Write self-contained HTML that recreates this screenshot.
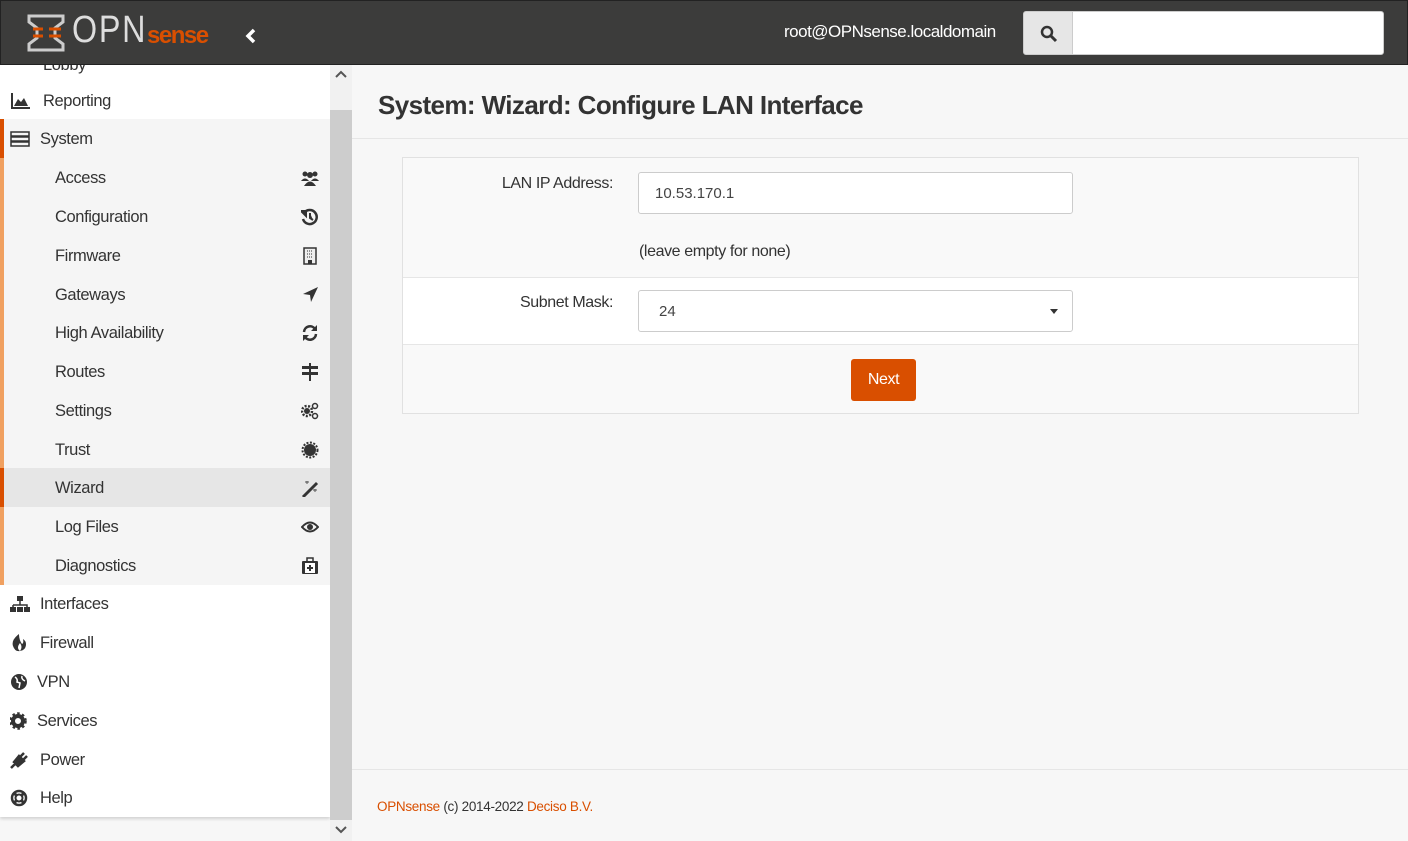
<!DOCTYPE html>
<html><head><meta charset="utf-8"><style>
*{box-sizing:border-box;margin:0;padding:0}
body{width:1408px;height:841px;overflow:hidden;background:#f7f7f7;font-family:"Liberation Sans",sans-serif;color:#333;position:relative}
.top{position:absolute;left:0;top:0;width:1408px;height:65px;background:#3c3c3b;border:1px solid #222}
.side{position:absolute;left:0;top:65px;width:330px;height:752px;background:#fff;box-shadow:0 2px 3px rgba(0,0,0,.15);overflow:hidden}
.row{position:absolute;left:0;width:330px;height:39px;font-size:16.5px;letter-spacing:-.4px;line-height:40px;color:#333}
.sub{background:#f5f5f5;border-left:4px solid #f0a060}
.sub span{position:absolute;left:51px}
.ic{position:absolute;right:11px;top:11px;width:18px;height:18px;fill:#333}
.mi{position:absolute;left:10px;top:11px;width:20px;height:18px;fill:#333}
.sb{position:absolute;left:330px;top:65px;width:22px;height:776px;background:#f1f1f1}
.thumb{position:absolute;left:330px;top:110px;width:22px;height:710px;background:#cdcdcd}
.main{position:absolute;left:352px;top:65px;width:1056px;height:776px}
h1{position:absolute;left:26px;top:25px;font-size:26px;color:#333;letter-spacing:-.6px;font-weight:bold}
.hdl{position:absolute;left:0;top:73px;width:1056px;border-top:1px solid #e6e6e6}
.box{position:absolute;left:50px;top:92px;width:957px;height:257px;border:1px solid #e1e1e1;background:#f9f9f9}
.lbl{position:absolute;right:745px;font-size:16px;letter-spacing:-.4px;color:#333}
.inp{position:absolute;left:235px;width:435px;height:42px;border:1px solid #ccc;border-radius:3px;background:#fff;font-size:15px;padding-left:16px;line-height:42px;color:#444}
.btn{position:absolute;left:448px;top:201px;width:65px;height:42px;background:#d94f00;border-radius:3px;color:#fff;font-size:16px;letter-spacing:-.4px;text-align:center;line-height:42px}
.foot{position:absolute;left:0;top:704px;width:1056px;border-top:1px solid #e6e6e6;font-size:13.5px;padding:29px 0 0 25px;color:#333;letter-spacing:-.3px}
.foot a{color:#d94f00;text-decoration:none}
</style></head><body>
<div class="top">
 <svg style="position:absolute;left:26px;top:13px" width="40" height="38" viewBox="0 0 40 38"><path d="M2 2h34v6L28 14v10l8 6v6H2v-6l8-6V14L2 8z" fill="none" stroke="#ccc" stroke-width="3"/><path d="M6 15h10M6 22h10M22 15h12M22 22h12" stroke="#d94f00" stroke-width="3"/></svg>
 <div style="position:absolute;left:71px;top:8px;font-size:38px;color:#ddd;font-weight:normal;letter-spacing:2px;transform:scaleX(.85);transform-origin:left">OPN</div>
 <div style="position:absolute;left:146px;top:21px;font-size:24px;color:#d94f00;font-weight:bold;letter-spacing:-1.5px">sense</div>
 <svg style="position:absolute;left:244px;top:27px" width="12" height="16" viewBox="0 0 12 16"><path d="M9 2L3 8l6 6" fill="none" stroke="#fff" stroke-width="3.5"/></svg>
 <div style="position:absolute;left:783px;top:21px;color:#fff;font-size:17px;letter-spacing:-.5px">root@OPNsense.localdomain</div>
 <div style="position:absolute;left:1022px;top:10px;width:50px;height:44px;background:#e6e6e6;border:1px solid #ccc;border-radius:3px 0 0 3px"><svg style="position:absolute;left:16px;top:13px" width="18" height="18" viewBox="0 0 18 18"><circle cx="7" cy="7" r="5" fill="none" stroke="#333" stroke-width="2.5"/><path d="M11 11l5 5" stroke="#333" stroke-width="3"/></svg></div>
 <div style="position:absolute;left:1071px;top:10px;width:312px;height:44px;background:#fff;border:1px solid #ccc;border-radius:0 3px 3px 0"></div>
</div>
<div class="side">
 <div class="row" style="top:-20px"><span style="position:absolute;left:43px">Lobby</span></div>
 <div class="row" style="top:16px"><svg class="mi" viewBox="0 0 20 18"><path d="M1 1v16h19v-2H3V1zM4 14l4-7 3 3 3-4 4 8z"/></svg><span style="position:absolute;left:43px">Reporting</span></div>
 <div class="row" style="top:54px;background:#f5f5f5;border-left:4px solid #d94f00"><svg class="mi" style="left:6px" viewBox="0 0 20 18"><path d="M1 2h18v4H1zM1 7h18v4H1zM1 12h18v4H1z" fill="none" stroke="#333" stroke-width="1.5"/></svg><span style="position:absolute;left:36px">System</span></div>
 <div class="row sub" style="top:93px"><span>Access</span><svg class="ic" viewBox="0 0 18 18"><circle cx="4" cy="5" r="2.5"/><circle cx="14" cy="5" r="2.5"/><circle cx="9" cy="6" r="3"/><path d="M0 12q4-5 8 0zM10 12q4-5 8 0zM3 17q6-9 12 0z"/></svg></div>
 <div class="row sub" style="top:132px"><span>Configuration</span><svg class="ic" viewBox="0 0 18 18"><path d="M3 5a7 7 0 1 1-1 6" fill="none" stroke="#333" stroke-width="2.5"/><path d="M0 3l5 0 0 5z M9 5v5l3 2" stroke="#333" stroke-width="2"/></svg></div>
 <div class="row sub" style="top:171px"><span>Firmware</span><svg class="ic" viewBox="0 0 18 18"><rect x="3" y="1" width="12" height="16" fill="#eee" stroke="#333" stroke-width="1.5"/><path d="M6 4h6M6 7h6M6 10h6" stroke="#333" stroke-dasharray="1 1"/><rect x="7" y="13" width="4" height="4"/></svg></div>
 <div class="row sub" style="top:210px"><span>Gateways</span><svg class="ic" viewBox="0 0 18 18"><path d="M17 1L2 8l7 1 1 7z"/></svg></div>
 <div class="row sub" style="top:248px"><span>High Availability</span><svg class="ic" viewBox="0 0 18 18"><path d="M3 8a6 6 0 0 1 11-3M15 10a6 6 0 0 1-11 3" fill="none" stroke="#333" stroke-width="2.5"/><path d="M16 1v6h-6zM2 17v-6h6z"/></svg></div>
 <div class="row sub" style="top:287px"><span>Routes</span><svg class="ic" viewBox="0 0 18 18"><path d="M8 0h2v18H8zM1 3h16v3H1zM1 9h16v3H1z"/></svg></div>
 <div class="row sub" style="top:326px"><span>Settings</span><svg class="ic" viewBox="0 0 18 18"><circle cx="6" cy="9" r="3"/><circle cx="6" cy="9" r="5" fill="none" stroke="#333" stroke-width="2.5" stroke-dasharray="2 1.5"/><circle cx="14" cy="4" r="2.5" fill="none" stroke="#333" stroke-width="1.5"/><circle cx="14" cy="14" r="2.5" fill="none" stroke="#333" stroke-width="1.5"/></svg></div>
 <div class="row sub" style="top:365px"><span>Trust</span><svg class="ic" viewBox="0 0 18 18"><circle cx="9" cy="9" r="6"/><circle cx="9" cy="9" r="7.5" fill="none" stroke="#333" stroke-width="2" stroke-dasharray="2 1.5"/></svg></div>
 <div class="row sub" style="top:403px;background:#e6e6e6;border-left-color:#d94f00"><span>Wizard</span><svg class="ic" viewBox="0 0 18 18"><path d="M2 17L15 4l1 1L3 18z" stroke="#333" stroke-width="1.5"/><path d="M6 2v3M4 3h4M14 10v3M12 11h4" stroke="#555"/></svg></div>
 <div class="row sub" style="top:442px"><span>Log Files</span><svg class="ic" viewBox="0 0 18 18"><path d="M1 9q8-9 16 0q-8 9-16 0z" fill="none" stroke="#333" stroke-width="2"/><circle cx="9" cy="9" r="3"/></svg></div>
 <div class="row sub" style="top:481px"><span>Diagnostics</span><svg class="ic" viewBox="0 0 18 18"><rect x="1" y="4" width="16" height="13" rx="1"/><rect x="6" y="1" width="6" height="4" fill="none" stroke="#333" stroke-width="1.5"/><rect x="4" y="6" width="10" height="10" fill="#fff"/><path d="M8 8h2v6H8zM6 10h6v2H6z"/></svg></div>
 <div class="row" style="top:519px"><svg class="mi" viewBox="0 0 20 18"><rect x="7" y="1" width="6" height="5"/><path d="M10 6v4M3 10h14v3M3 10v3" stroke="#333" stroke-width="1.5" fill="none"/><rect x="0" y="12" width="6" height="5"/><rect x="7" y="12" width="6" height="5"/><rect x="14" y="12" width="6" height="5"/></svg><span style="position:absolute;left:40px">Interfaces</span></div>
 <div class="row" style="top:558px"><svg class="mi" viewBox="0 0 20 18"><path d="M9 0q-8 6-6 12q2 6 7 5q-4-3 0-8q3 4 0 8q6-1 6-7q0-3-3-5q1 4-1 5q-3-4-3-10z"/></svg><span style="position:absolute;left:40px">Firewall</span></div>
 <div class="row" style="top:597px"><svg class="mi" viewBox="0 0 20 18"><circle cx="9" cy="9" r="8"/><path d="M5 4q3 2 2 5l3 1-1 5M12 3q-1 3 3 5" stroke="#fff" stroke-width="1.5" fill="none"/></svg><span style="position:absolute;left:37px">VPN</span></div>
 <div class="row" style="top:636px"><svg class="mi" viewBox="0 0 20 18"><circle cx="8" cy="9" r="5" fill="none" stroke="#333" stroke-width="4"/><circle cx="8" cy="9" r="7.5" fill="none" stroke="#333" stroke-width="2.5" stroke-dasharray="2.5 2.4"/></svg><span style="position:absolute;left:37px">Services</span></div>
 <div class="row" style="top:675px"><svg class="mi" viewBox="0 0 20 18"><path d="M1 17l4-4M4 11l5-6 5 5-6 5zM10 6l4-4M13 9l4-4" stroke="#333" stroke-width="2.5"/></svg><span style="position:absolute;left:40px">Power</span></div>
 <div class="row" style="top:713px"><svg class="mi" viewBox="0 0 20 18"><circle cx="9" cy="9" r="7" fill="none" stroke="#333" stroke-width="2.5"/><circle cx="9" cy="9" r="3.5" fill="none" stroke="#333" stroke-width="2"/><path d="M4 4l3 3M14 4l-3 3M4 14l3-3M14 14l-3-3" stroke="#333" stroke-width="3"/></svg><span style="position:absolute;left:40px">Help</span></div>
</div>
<div class="sb"></div><div class="thumb"></div>
<svg style="position:absolute;left:335px;top:826px" width="12" height="8" viewBox="0 0 12 8"><path d="M1 1l5 5 5-5" fill="none" stroke="#555" stroke-width="2"/></svg>
<svg style="position:absolute;left:335px;top:70px" width="12" height="8" viewBox="0 0 12 8"><path d="M1 7l5-5 5 5" fill="none" stroke="#555" stroke-width="2"/></svg>
<div class="main">
 <h1>System: Wizard: Configure LAN Interface</h1>
 <div class="hdl"></div>
 <div class="box">
  <div class="lbl" style="top:17px">LAN IP Address:</div>
  <div class="inp" style="top:14px">10.53.170.1</div>
  <div style="position:absolute;left:236px;top:85px;font-size:16px;letter-spacing:-.4px">(leave empty for none)</div>
  <div style="position:absolute;left:0;top:119px;width:955px;height:68px;background:#fff;border-top:1px solid #e6e6e6;border-bottom:1px solid #e6e6e6">
   <div class="lbl" style="top:16px;right:745px">Subnet Mask:</div>
   <div class="inp" style="top:12px;padding-left:20px">24<span style="position:absolute;right:14px;top:18px;border:4px solid transparent;border-top:5px solid #333;border-bottom:0"></span></div>
  </div>
  <div class="btn">Next</div>
 </div>
 <div class="foot"><a>OPNsense</a> (c) 2014-2022 <a>Deciso B.V.</a></div>
</div>
</body></html>
